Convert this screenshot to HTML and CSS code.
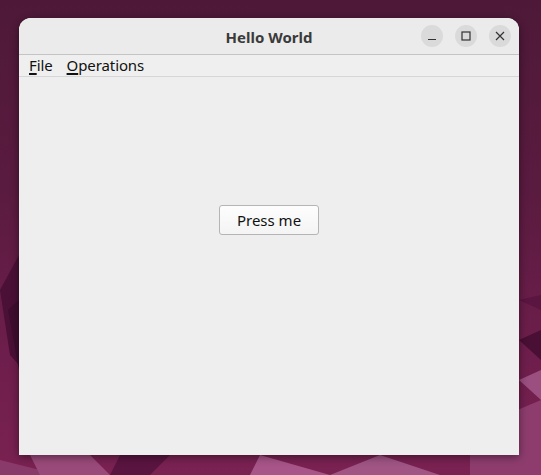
FILE: index.html
```html
<!DOCTYPE html>
<html>
<head>
<meta charset="utf-8">
<link rel="stylesheet" href="styles.css">
</head>
<body>
<div class="desktop">
  <svg class="wallpaper" width="541" height="475" viewBox="0 0 541 475">
    <polygon points="0,290 19,255 19,365 10,355" fill="#4a1036"/>
    <polygon points="8,310 19,300 19,370" fill="#3f0d2f"/>
    <polygon points="0,460 60,475 0,475" fill="#8a3a6a"/>
    <polygon points="30,455 90,455 110,475 40,475" fill="#9a4a7a"/>
    <polygon points="120,455 170,455 150,475 110,475" fill="#5a1440"/>
    <polygon points="260,455 330,475 250,475" fill="#a8558a"/>
    <polygon points="380,455 440,475 330,475" fill="#a05585"/>
    <polygon points="470,430 541,400 541,475 470,475" fill="#8e3c6e"/>
    <polygon points="519,340 541,330 541,360" fill="#4a0f35"/>
    <polygon points="519,300 541,295 541,310" fill="#5a1540"/>
    <polygon points="519,380 541,370 541,400" fill="#9a4f80"/>
  </svg>
  <div class="window">
    <div class="titlebar">
      <div class="title">Hello World</div>
      <div class="controls">
        <div class="ctl"><svg width="10" height="10" viewBox="0 0 10 10"><path d="M1 8.5h8" stroke="#333" stroke-width="1.2"/></svg></div>
        <div class="ctl"><svg width="10" height="10" viewBox="0 0 10 10"><rect x="1" y="1" width="8" height="8" fill="none" stroke="#333" stroke-width="1.2"/></svg></div>
        <div class="ctl"><svg width="10" height="10" viewBox="0 0 10 10"><path d="M1 1L9 9M9 1L1 9" stroke="#333" stroke-width="1.2"/></svg></div>
      </div>
    </div>
    <div class="menubar">
      <span class="menu"><u>F</u>ile</span>
      <span class="menu"><u>O</u>perations</span>
    </div>
    <div class="content">
      <button class="btn">Press me</button>
    </div>
  </div>
</div>
</body>
</html>
```
FILE: styles.css
```css
html, body {
  margin: 0;
  padding: 0;
}
body {
  width: 541px;
  height: 475px;
  overflow: hidden;
}
.desktop {
  position: relative;
  width: 541px;
  height: 475px;
  box-sizing: border-box;
  padding: 18px 22px 20px 19px;
  background: linear-gradient(180deg, #4e1938 0%, #5a1b40 40%, #6e1e4c 75%, #7a2252 100%);
}
.wallpaper {
  position: absolute;
  left: 0;
  top: 0;
}
.window {
  position: relative;
  width: 500px;
  height: 437px;
  display: flex;
  flex-direction: column;
  background: #eeeeee;
  border-radius: 12px 12px 0 0;
  box-shadow: 0 2px 8px rgba(0,0,0,0.45);
  overflow: hidden;
}
.titlebar {
  height: 36px;
  flex: none;
  background: #ebebeb;
  border-bottom: 1px solid #c4c4c4;
  position: relative;
  display: flex;
  align-items: center;
  justify-content: center;
}
.title {
  font-family: "Noto Sans", "DejaVu Sans", sans-serif;
  font-weight: bold;
  font-size: 15px;
  color: #3a3a3a;
  padding-top: 1px;
}
.controls {
  position: absolute;
  right: 8px;
  top: 7px;
  display: flex;
  gap: 12px;
}
.ctl {
  width: 22px;
  height: 22px;
  border-radius: 50%;
  background: #dadada;
  display: flex;
  align-items: center;
  justify-content: center;
}
.menubar {
  height: 21px;
  flex: none;
  background: #efefef;
  border-bottom: 1px solid #d6d6d6;
  display: flex;
  align-items: center;
  padding-left: 10px;
  gap: 14px;
  font-family: "Noto Sans", "DejaVu Sans", sans-serif;
  font-size: 15px;
  letter-spacing: -0.1px;
  color: #111;
}
.menu {
  line-height: 21px;
}
.menu u {
  text-decoration-thickness: 2px;
  text-underline-offset: 2px;
}
.content {
  flex: 1;
  background: #eeeeee;
  display: flex;
  justify-content: center;
  padding-top: 128px;
  align-items: flex-start;
}
.btn {
  width: 100px;
  height: 30px;
  border: 1px solid #b5b5b5;
  border-radius: 3px;
  background: linear-gradient(180deg, #fdfdfd, #f4f4f4);
  font-family: "Noto Sans", "DejaVu Sans", sans-serif;
  font-size: 15px;
  color: #111;
  padding: 0;
}
```
